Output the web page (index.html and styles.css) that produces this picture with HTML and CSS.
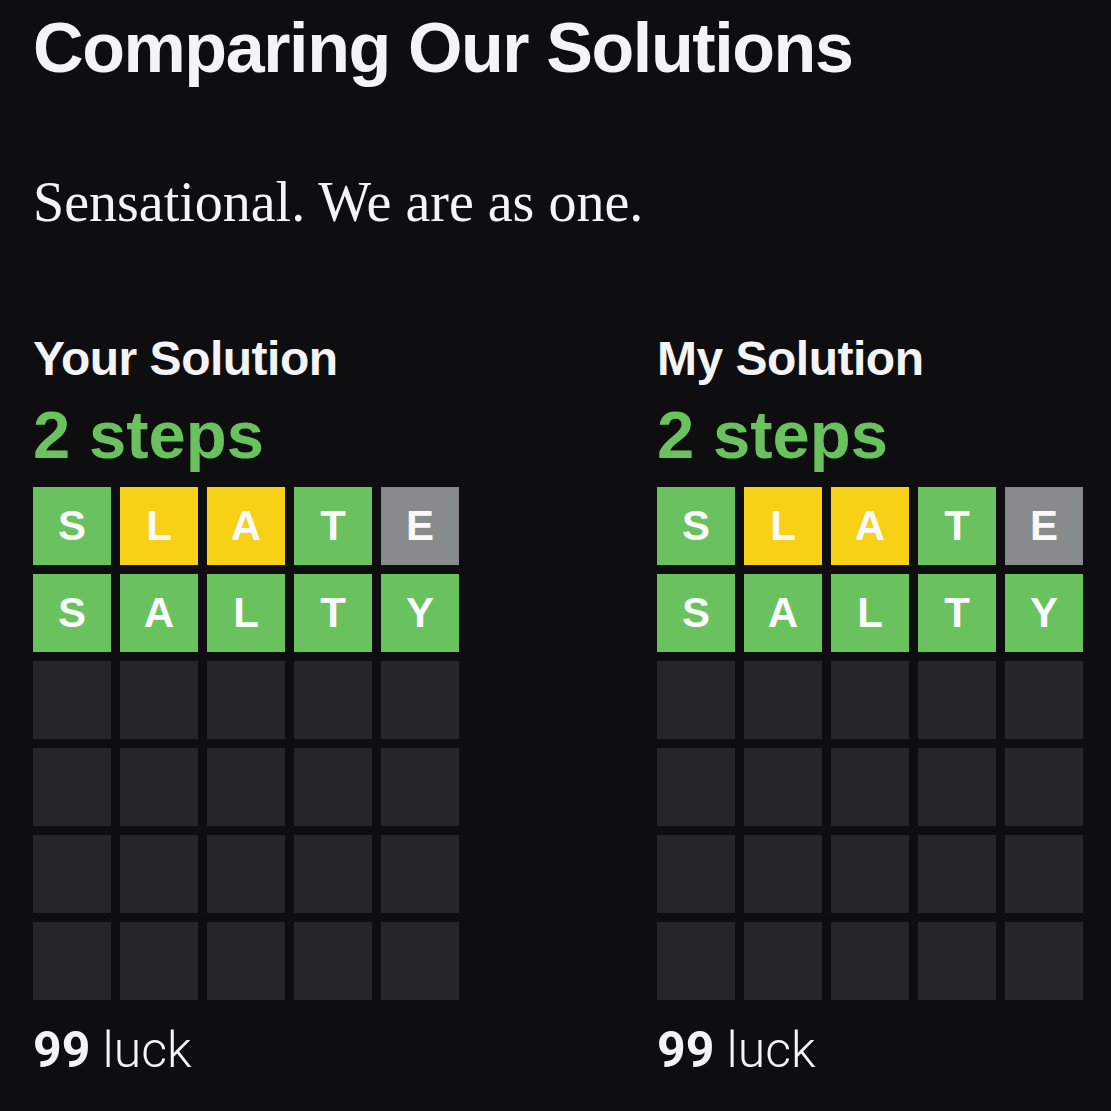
FILE: index.html
```html
<!DOCTYPE html>
<html>
<head>
  <title>Comparing Our Solutions</title>
  <link rel="stylesheet" href="styles.css">
</head>
<body>
  <div class="page">
    <h1 class="title">Comparing Our Solutions</h1>
    <p class="verdict">Sensational. We are as one.</p>

    <div class="compare">
      <div class="solution">
        <h2 class="who">Your Solution</h2>
        <div class="steps">2 steps</div>
        <div class="board">
          <div class="tile green">S</div>
          <div class="tile yellow">L</div>
          <div class="tile yellow">A</div>
          <div class="tile green">T</div>
          <div class="tile gray">E</div>
          <div class="tile green">S</div>
          <div class="tile green">A</div>
          <div class="tile green">L</div>
          <div class="tile green">T</div>
          <div class="tile green">Y</div>
          <div class="tile"></div><div class="tile"></div><div class="tile"></div><div class="tile"></div><div class="tile"></div>
          <div class="tile"></div><div class="tile"></div><div class="tile"></div><div class="tile"></div><div class="tile"></div>
          <div class="tile"></div><div class="tile"></div><div class="tile"></div><div class="tile"></div><div class="tile"></div>
          <div class="tile"></div><div class="tile"></div><div class="tile"></div><div class="tile"></div><div class="tile"></div>
        </div>
        <div class="luck"><b>99</b> luck</div>
      </div>

      <div class="solution">
        <h2 class="who">My Solution</h2>
        <div class="steps">2 steps</div>
        <div class="board">
          <div class="tile green">S</div>
          <div class="tile yellow">L</div>
          <div class="tile yellow">A</div>
          <div class="tile green">T</div>
          <div class="tile gray">E</div>
          <div class="tile green">S</div>
          <div class="tile green">A</div>
          <div class="tile green">L</div>
          <div class="tile green">T</div>
          <div class="tile green">Y</div>
          <div class="tile"></div><div class="tile"></div><div class="tile"></div><div class="tile"></div><div class="tile"></div>
          <div class="tile"></div><div class="tile"></div><div class="tile"></div><div class="tile"></div><div class="tile"></div>
          <div class="tile"></div><div class="tile"></div><div class="tile"></div><div class="tile"></div><div class="tile"></div>
          <div class="tile"></div><div class="tile"></div><div class="tile"></div><div class="tile"></div><div class="tile"></div>
        </div>
        <div class="luck"><b>99</b> luck</div>
      </div>
    </div>
  </div>
</body>
</html>
```

FILE: styles.css
```css
body {
  margin: 0;
  padding: 0;
  background: #0e0e10;
  color: #f4f4f6;
}

.page {
  padding: 8px 33px 0 33px;
}

/* heading */
.title {
  font-family: "Liberation Sans", Arial, sans-serif;
  font-weight: bold;
  font-size: 70px;
  letter-spacing: -1.4px;
  line-height: 80px;
  margin: 0;
}

.verdict {
  font-family: "Liberation Serif", "Times New Roman", serif;
  font-size: 56px;
  line-height: 60px;
  margin: 84px 0 0 0;
}

/* two boards side by side */
.compare {
  display: grid;
  grid-template-columns: 426px 426px;
  column-gap: 198px;
  margin-top: 99px;
}

.who {
  font-family: "Liberation Sans", Arial, sans-serif;
  font-weight: bold;
  font-size: 48px;
  letter-spacing: -0.5px;
  line-height: 56px;
  margin: 0;
}

.steps {
  font-family: "Liberation Sans", Arial, sans-serif;
  font-weight: bold;
  font-size: 67px;
  line-height: 70px;
  color: #6ac25f;
  margin-top: 13px;
}

.board {
  display: grid;
  grid-template-columns: repeat(5, 78px);
  grid-auto-rows: 78px;
  gap: 9px;
  margin-top: 17px;
}

.tile {
  background: #262628;
  display: flex;
  align-items: center;
  justify-content: center;
  font-family: "Liberation Sans", Arial, sans-serif;
  font-weight: bold;
  font-size: 42px;
  color: #fafafa;
}

.green { background: #6ac25f; }
.yellow { background: #f6d116; }
.gray { background: #888b8b; }

.luck {
  font-family: Roboto, "Liberation Sans", sans-serif;
  font-weight: 300;
  font-size: 50px;
  line-height: 56px;
  margin-top: 22px;
}

.luck b {
  font-weight: bold;
}
```
